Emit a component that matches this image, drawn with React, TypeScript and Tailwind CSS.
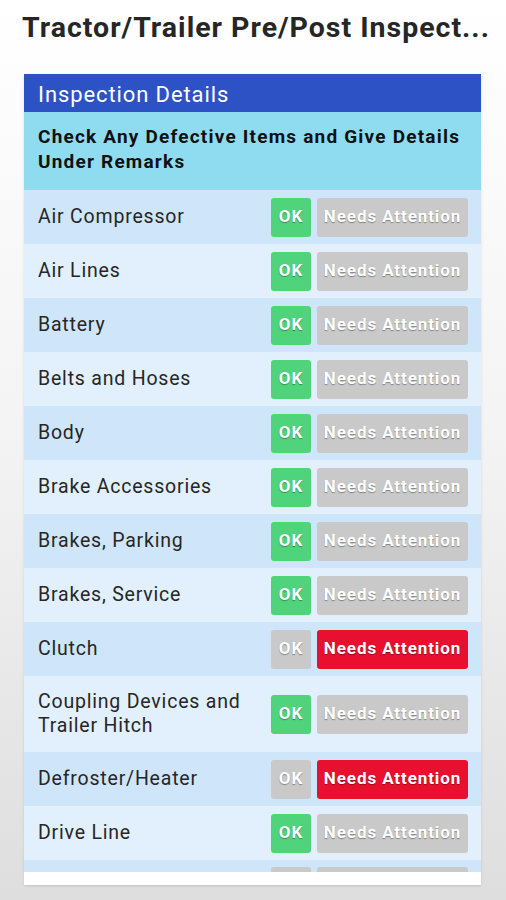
import React from 'react';

type Status = 'ok' | 'bad';

const items: { label: string; status: Status }[] = [
  { label: 'Air Compressor', status: 'ok' },
  { label: 'Air Lines', status: 'ok' },
  { label: 'Battery', status: 'ok' },
  { label: 'Belts and Hoses', status: 'ok' },
  { label: 'Body', status: 'ok' },
  { label: 'Brake Accessories', status: 'ok' },
  { label: 'Brakes, Parking', status: 'ok' },
  { label: 'Brakes, Service', status: 'ok' },
  { label: 'Clutch', status: 'bad' },
  { label: 'Coupling Devices and Trailer Hitch', status: 'ok' },
  { label: 'Defroster/Heater', status: 'bad' },
  { label: 'Drive Line', status: 'ok' },
];

const btn =
  'h-[39px] rounded-[3px] flex items-center justify-center text-[17px] font-bold text-white tracking-[0.9px] [text-shadow:0_1px_1px_rgba(0,0,0,0.35)]';

function InspectionRow({ label, status, idx }: { label: string; status: Status; idx: number }) {
  const isOk = status === 'ok';
  return (
    <div
      className={`flex items-center shrink-0 pl-[14px] pr-[13px] min-h-[54px] ${
        idx % 2 === 0 ? 'bg-[#cfe6fa]' : 'bg-[#e2f0fd]'
      }`}
    >
      <div className="flex-1 py-[14px] text-[19.5px] leading-[24px] text-[#262626] tracking-[0.8px] pr-2">
        {label}
      </div>
      <div className="flex gap-[6px]">
        <div className={`${btn} w-[40px] ${isOk ? 'bg-[#4fd47b]' : 'bg-[#c9c9c9]'}`}>OK</div>
        <div className={`${btn} w-[151px] ${isOk ? 'bg-[#c9c9c9]' : 'bg-[#e8102e]'}`}>
          Needs Attention
        </div>
      </div>
    </div>
  );
}

export default function App() {
  return (
    <div className="w-[506px] h-[900px] overflow-hidden flex flex-col bg-gradient-to-b from-white via-[#f3f3f3] to-[#dedede] font-['Roboto',sans-serif]">
      <h1 className="pl-[22px] pt-[9px] h-[74px] text-[28.5px] leading-[38px] font-bold text-[#262626] tracking-[1px] whitespace-nowrap">
        Tractor/Trailer Pre/Post Inspect...
      </h1>
      <div className="mx-[24px] w-[457px] h-[811px] bg-white flex flex-col shadow-sm">
        <div className="h-[38px] bg-[#2d52c5] text-white text-[22px] leading-[38px] pt-[2px] pl-[14px] shrink-0 tracking-[0.9px]">
          Inspection Details
        </div>
        <div className="h-[78px] bg-[#8fdcf0] text-[#111] font-bold text-[19px] leading-[25px] pl-[14px] pt-[12px] shrink-0 tracking-[1.2px] whitespace-nowrap">
          Check Any Defective Items and Give Details
          <br />
          Under Remarks
        </div>
        <div className="flex-1 overflow-hidden flex flex-col">
          {items.map((it, idx) => (
            <InspectionRow key={idx} label={it.label} status={it.status} idx={idx} />
          ))}
          <div className="shrink-0 h-[54px] bg-[#cfe6fa] flex justify-end pr-[13px] pt-[7px]">
            <div className="flex gap-[6px]">
              <div className="w-[40px] h-[39px] rounded-[3px] bg-[#c9c9c9]" />
              <div className="w-[151px] h-[39px] rounded-[3px] bg-[#c9c9c9]" />
            </div>
          </div>
        </div>
        <div className="h-[13px] bg-white shrink-0" />
      </div>
    </div>
  );
}
